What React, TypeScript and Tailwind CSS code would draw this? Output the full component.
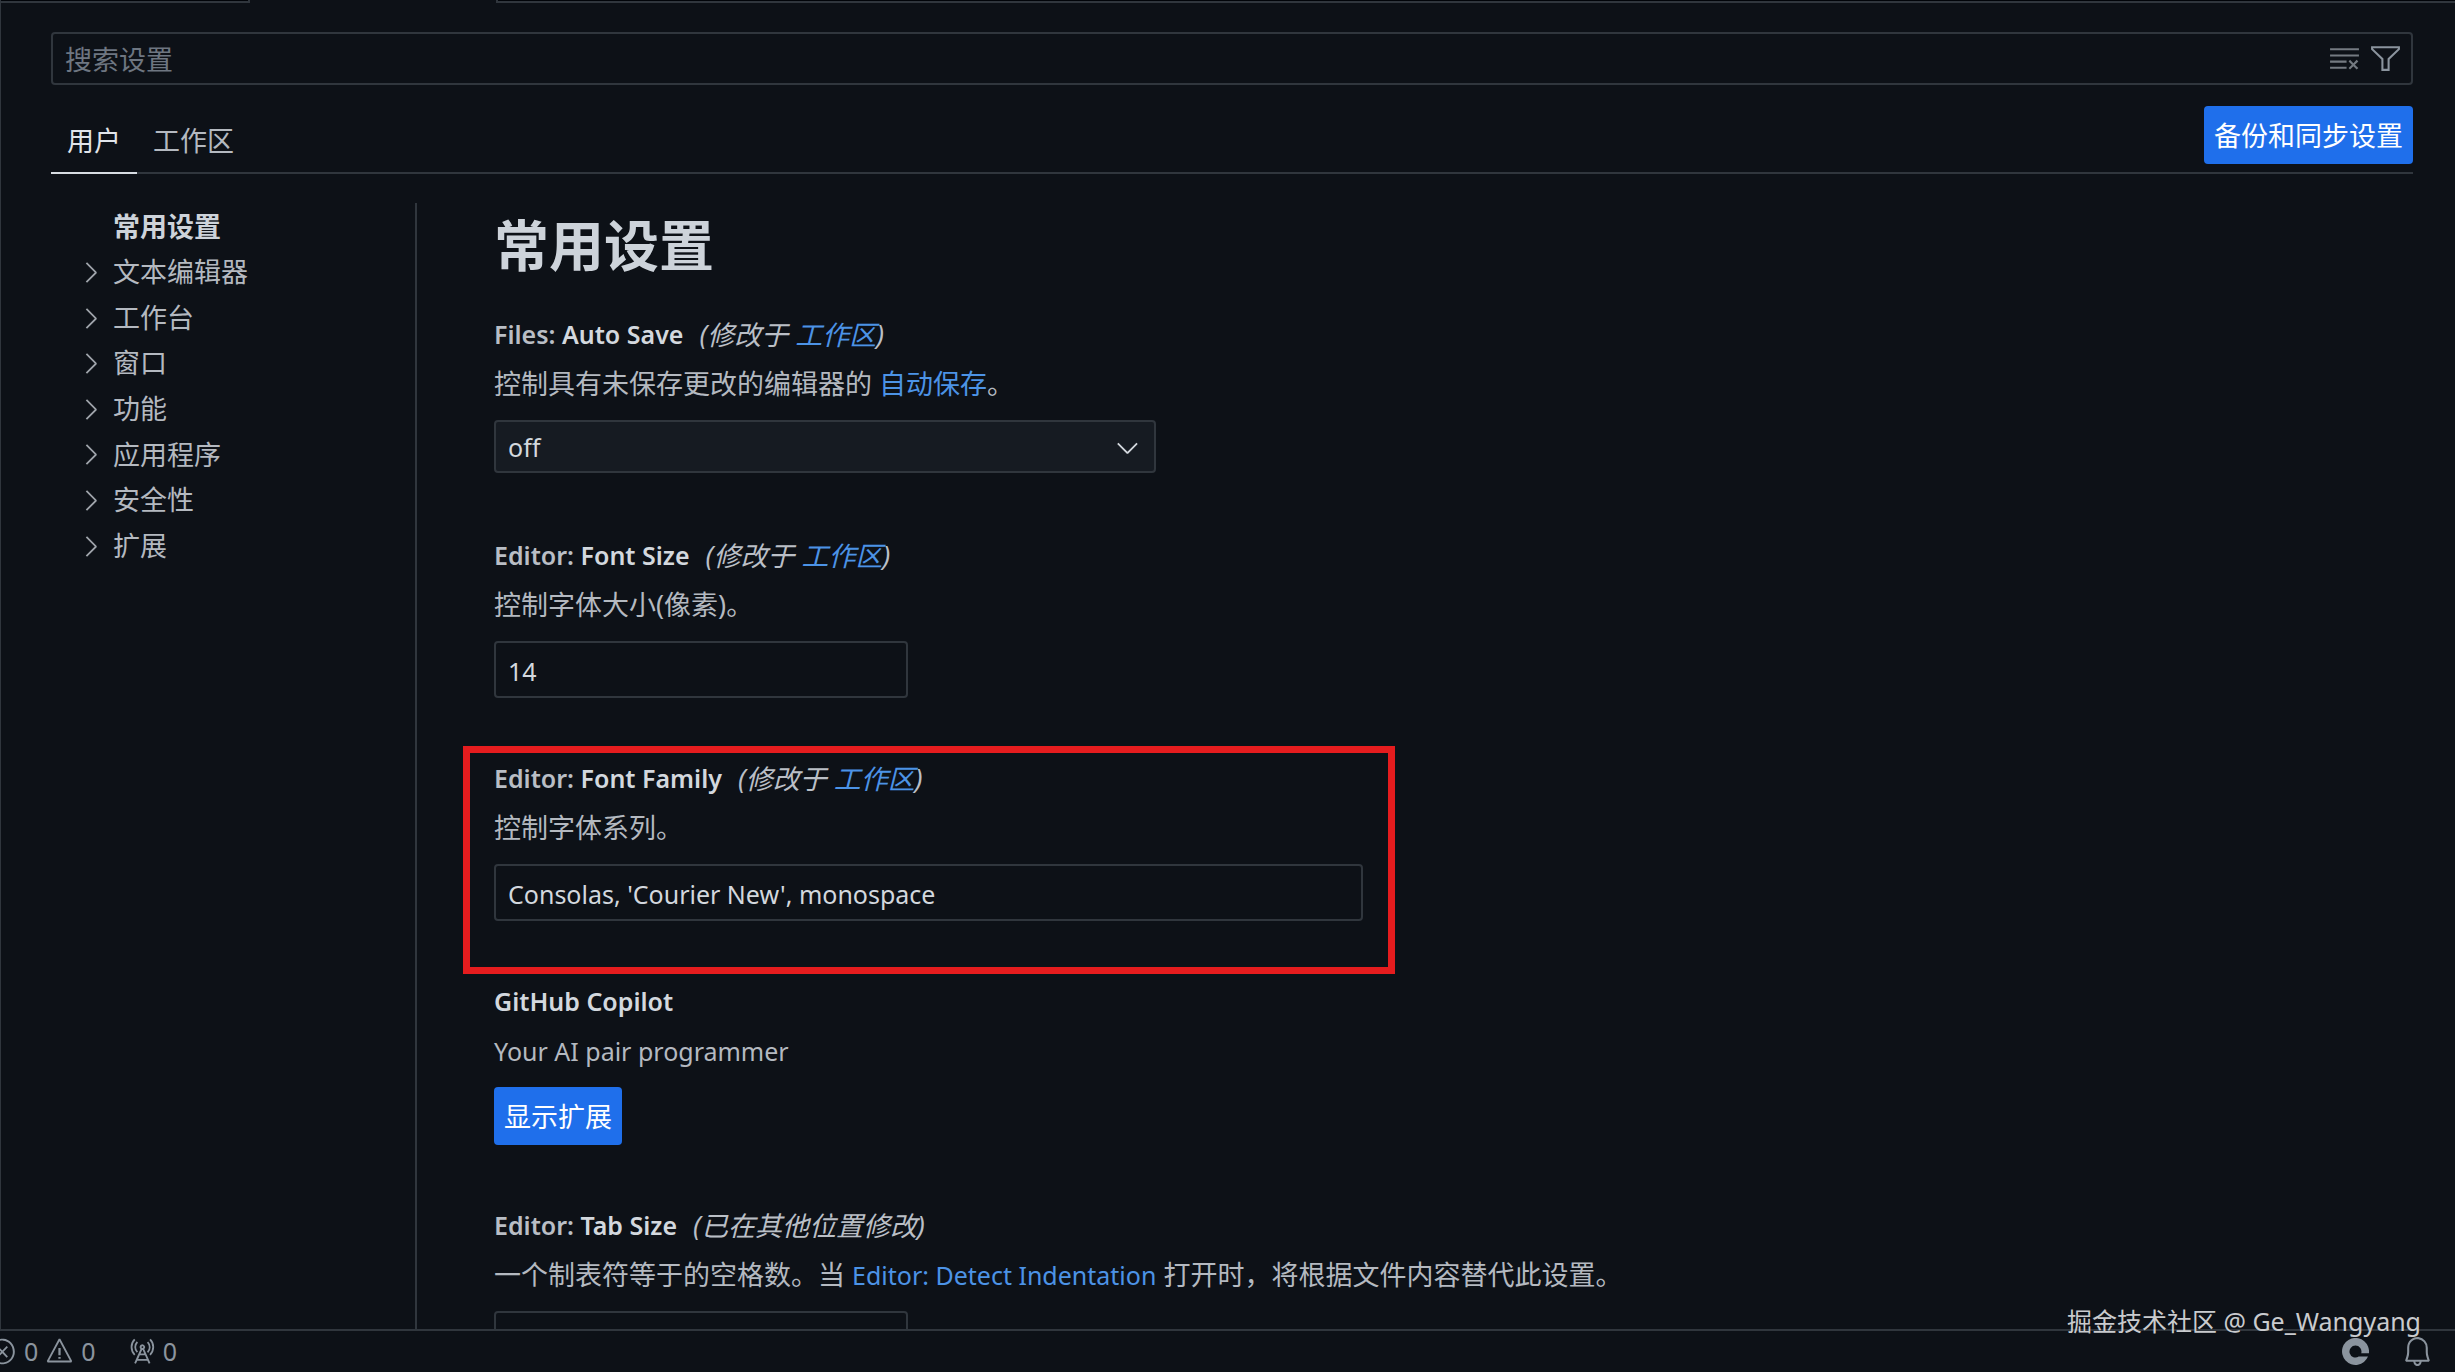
import { useState, type ReactNode } from "react";
import {
  VscBell,
  VscChevronDown,
  VscChevronRight,
  VscClearAll,
  VscError,
  VscFilter,
  VscRadioTower,
  VscWarning,
} from "react-icons/vsc";

const navItems = ["文本编辑器", "工作台", "窗口", "功能", "应用程序", "安全性", "扩展"];

function Latin({ children }: { children: ReactNode }) {
  return <span className="text-[25px]">{children}</span>;
}

function Link({ children }: { children: ReactNode }) {
  return (
    <a href="#" className="text-[#4c93e6]">
      {children}
    </a>
  );
}

function ModifiedIn() {
  return (
    <>
      (修改于 <Link>工作区</Link>)
    </>
  );
}

type SettingProps = {
  id?: string;
  category?: string;
  name: string;
  note?: ReactNode;
  description: ReactNode;
  highlighted?: boolean;
  children: ReactNode;
};

function Setting({ id, category, name, note, description, highlighted, children }: SettingProps) {
  return (
    <section className="relative pb-[57px]">
      {highlighted && (
        <div className="pointer-events-none absolute -top-[9px] -left-[31px] h-[228px] w-[932px] border-[7px] border-[#e51c1e]" />
      )}
      <div className="flex h-12 items-center gap-4 whitespace-nowrap">
        <label htmlFor={id} className="text-[25px] font-semibold text-[#d3d8de]">
          {category && <span className="text-[#b9bec5]">{category}: </span>}
          {name}
        </label>
        {note && <span className="text-[#babfc6] italic">{note}</span>}
      </div>
      <p className="h-12 leading-[50px] whitespace-nowrap">{description}</p>
      <div className="mt-[13px]">{children}</div>
    </section>
  );
}

function Field({ id, value, wide }: { id: string; value: string; wide?: boolean }) {
  const [text, setText] = useState(value);
  return (
    <input
      id={id}
      type="text"
      value={text}
      onChange={(e) => setText(e.target.value)}
      className={
        (wide ? "w-[869px]" : "w-[414px]") +
        " block h-[57px] rounded-[4px] border-2 border-[#30363d] bg-transparent px-3 pt-0.5 text-[25px] text-[#d3d8de] outline-none"
      }
    />
  );
}

export default function App() {
  return (
    <div className="flex h-screen flex-col overflow-hidden bg-[#0d1117] font-['Noto_Sans','Noto_Sans_CJK_SC',sans-serif] text-[27px] text-[#b4b9c0]">
      <div className="flex min-h-0 flex-1 flex-col border-l border-[#30363d]">
        <div className="flex h-[3px] shrink-0">
          <div className="w-[249px] border-r-2 border-b-2 border-[#30363d] bg-[#010409]" />
          <div className="w-[246px]" />
          <div className="flex-1 border-b-2 border-l-2 border-[#30363d] bg-[#010409]" />
        </div>

        <header className="shrink-0 pt-[29px] pr-[42px] pl-[50px]">
          <div className="flex h-[53px] items-center rounded-[4px] border-2 border-[#30363d] pr-[9px] pl-3">
            <input
              type="text"
              aria-label="搜索设置"
              placeholder="搜索设置"
              className="h-full min-w-0 flex-1 bg-transparent pt-0.5 outline-none placeholder:text-[#6e7681]"
            />
            <button type="button" aria-label="清除设置搜索输入" className="mr-2 text-[#747a81]">
              <VscClearAll className="size-[33px]" />
            </button>
            <button type="button" aria-label="筛选设置" className="text-[#8b949e]">
              <VscFilter className="size-[33px]" />
            </button>
          </div>

          <div className="mt-[21px] flex h-[68px] items-start justify-between border-b-2 border-[#30363d]">
            <div role="tablist" className="flex h-[68px]">
              <button
                type="button"
                role="tab"
                aria-selected="true"
                className="border-b-2 border-[#d7dce2] px-4 pt-1 text-[#e1e5ea]"
              >
                用户
              </button>
              <button type="button" role="tab" aria-selected="false" className="px-4 pt-0.5">
                工作区
              </button>
            </div>
            <button
              type="button"
              className="h-[58px] rounded-[4px] bg-[#1f6feb] px-2.5 pt-0.5 text-white"
            >
              备份和同步设置
            </button>
          </div>
        </header>

        <div className="flex min-h-0 flex-1 pt-[29px] pl-[50px]">
          <nav className="w-[364px] shrink-0 pt-px">
            <ul className="grid h-[365px] grid-rows-8">
              <li className="flex items-center pl-[62px] font-bold text-[#cdd3da]">
                <a href="#">常用设置</a>
              </li>
              {navItems.map((item) => (
                <li key={item} className="flex items-center">
                  <VscChevronRight className="mr-1.5 ml-[23px] size-[33px] text-[#9fa4ab]" />
                  <a href="#">{item}</a>
                </li>
              ))}
            </ul>
          </nav>

          <main className="min-w-0 flex-1 overflow-hidden border-l-2 border-[#30363d] pl-[77px]">
            <h1 className="h-[108px] text-[55px] leading-[84px] font-bold text-[#cdd3da]">
              常用设置
            </h1>

            <Setting
              id="auto-save"
              category="Files"
              name="Auto Save"
              note={<ModifiedIn />}
              description={
                <>
                  控制具有未保存更改的编辑器的 <Link>自动保存</Link>。
                </>
              }
            >
              <div className="relative w-[662px] pb-0.5">
                <select
                  id="auto-save"
                  className="block h-[53px] w-full appearance-none rounded-[4px] border-2 border-[#30363d] bg-[#161b22] px-3 pt-0.5 text-[25px] text-[#d3d8de] outline-none"
                >
                  <option>off</option>
                  <option>afterDelay</option>
                  <option>onFocusChange</option>
                  <option>onWindowChange</option>
                </select>
                <VscChevronDown className="pointer-events-none absolute top-[11px] right-3 size-[33px] text-[#d3d8de]" />
              </div>
            </Setting>

            <Setting
              id="font-size"
              category="Editor"
              name="Font Size"
              note={<ModifiedIn />}
              description="控制字体大小(像素)。"
            >
              <Field id="font-size" value="14" />
            </Setting>

            <Setting
              id="font-family"
              category="Editor"
              name="Font Family"
              note={<ModifiedIn />}
              description="控制字体系列。"
              highlighted
            >
              <Field id="font-family" value="Consolas, 'Courier New', monospace" wide />
            </Setting>

            <Setting
              id="copilot"
              name="GitHub Copilot"
              description={<Latin>Your AI pair programmer</Latin>}
            >
              <button
                id="copilot"
                type="button"
                className="block h-[58px] rounded-[4px] bg-[#1f6feb] px-2.5 pt-0.5 text-white"
              >
                显示扩展
              </button>
            </Setting>

            <Setting
              id="tab-size"
              category="Editor"
              name="Tab Size"
              note="(已在其他位置修改)"
              description={
                <>
                  一个制表符等于的空格数。当{" "}
                  <Link>
                    <Latin>Editor: Detect Indentation</Latin>
                  </Link>{" "}
                  打开时，将根据文件内容替代此设置。
                </>
              }
            >
              <Field id="tab-size" value="" />
            </Setting>
          </main>
        </div>
      </div>

      <footer className="relative flex h-[43px] shrink-0 items-center border-t-2 border-[#30363d] pr-[21px] text-[25px] text-[#8b949e]">
        <button type="button" className="-ml-3 flex items-center gap-[7px]">
          <VscError className="size-[29px]" />
          0
          <VscWarning className="size-[29px]" />
          0
        </button>
        <button type="button" className="ml-[31px] flex items-center gap-[7px]">
          <VscRadioTower className="size-[29px]" />
          0
        </button>
        <button type="button" aria-label="Copilot" className="ml-auto">
          <svg viewBox="0 0 27 27" className="size-[27px]">
            <path
              d="M26.9 15.3A13.5 13.5 0 1 0 26 18.6H16.7A6 6 0 1 1 19.2 15.3Z"
              fill="currentColor"
            />
          </svg>
        </button>
        <button type="button" aria-label="通知" className="ml-8">
          <VscBell className="size-[33px]" />
        </button>
        <div className="pointer-events-none absolute right-[34px] bottom-[33px] leading-9 text-[#c9cbce]">
          掘金技术社区 @ Ge_Wangyang
        </div>
      </footer>
    </div>
  );
}
